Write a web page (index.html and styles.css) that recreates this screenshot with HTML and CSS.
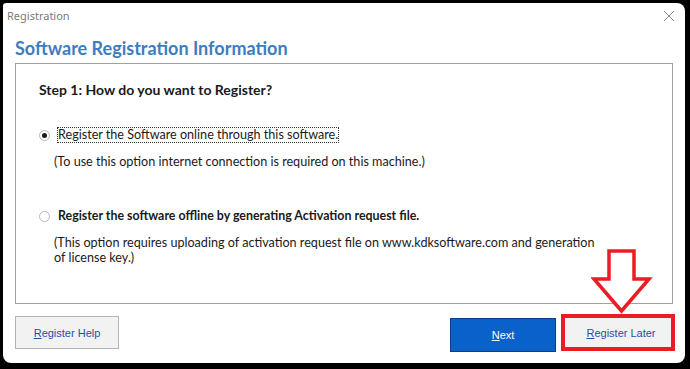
FILE: index.html
```html
<!doctype html>
<html lang="en">
    <head>
        <meta charset="utf-8">
        <title>Registration</title>
        <meta name="viewport" content="width=device-width, initial-scale=1">
        <link rel="stylesheet" href="styles.css">
    </head>
    <body>
        <div class="window">
            <div class="titlebar">
                <span class="caption">Registration</span>
                <svg class="close" width="12" height="12" viewBox="0 0 12 12">
                    <path d="M1 1 L11 11 M11 1 L1 11" stroke="#8a8a8a" stroke-width="1" fill="none"/>
                </svg>
            </div>

            <h1 class="heading">Software Registration Information</h1>

            <div class="panel">
                <div class="step">Step 1: How do you want to Register?</div>

                <div class="option">
                    <div class="choice">
                        <span class="radio checked"></span>
                        <span class="label focused">Register the Software online through this software.</span>
                    </div>
                    <div class="note">(To use this option internet connection is required on this machine.)</div>
                </div>

                <div class="option second">
                    <div class="choice">
                        <span class="radio"></span>
                        <span class="label bold">Register the software offline by generating Activation request file.</span>
                    </div>
                    <div class="note">(This option requires uploading of activation request file on www.kdksoftware.com and generation<br>of license key.)</div>
                </div>
            </div>

            <div class="buttons">
                <div class="button help"><span><u>R</u>egister Help</span></div>
                <div class="spacer"></div>
                <div class="button next"><span><u>N</u>ext</span></div>
                <div class="highlight">
                    <div class="button later"><span><u>R</u>egister Later</span></div>
                </div>
            </div>

            <!-- annotation arrow pointing at Register Later -->
            <svg class="arrow" width="62" height="66" viewBox="0 0 62 66">
                <path d="M18 2 L43 2 L43 30 L58 30 L30.5 62 L3 30 L18 30 Z" fill="#ffffff" stroke="#ec1c24" stroke-width="3.5" stroke-linejoin="miter"/>
            </svg>
        </div>
    </body>
</html>
```

FILE: styles.css
```css
body {
    margin: 0;
    background-color: #000;
}

.window {
    position: relative;
    box-sizing: border-box;
    margin: 3px 5px 0 3px;
    height: 360px;
    background-color: #fff;
    border-radius: 3px 8px 8px 8px;
    display: flex;
    flex-direction: column;
}

.titlebar {
    display: flex;
    align-items: center;
    justify-content: space-between;
    height: 24px;
    padding: 0 10px 0 4px;
}

.caption {
    font-family: "Noto Sans", sans-serif;
    font-size: 11px;
    color: #7a7a7a;
}

.close {
    display: block;
    margin-top: 1px;
}

.heading {
    margin: 7px 0 0 12px;
    height: 29px;
    font-family: Lato, sans-serif;
    font-size: 18px;
    font-weight: bold;
    color: #3d7dbd;
    line-height: 29px;
}

.panel {
    box-sizing: border-box;
    margin: 0 12px;
    height: 241px;
    border: 1px solid #a0a0a0;
    padding: 17px 0 0 23px;
    font-family: Lato, sans-serif;
    font-size: 12.6px;
    color: #1a1a1a;
}

.step {
    font-weight: bold;
    font-size: 14px;
    line-height: 18px;
}

.option {
    margin-top: 27px;
}

.option.second {
    margin-top: 38px;
}

.choice {
    display: flex;
    align-items: center;
    height: 18px;
}

.radio {
    box-sizing: border-box;
    width: 11px;
    height: 11px;
    margin: 0 7px 0 0;
    border: 1px solid #b8b8b8;
    border-radius: 50%;
    background-color: #fff;
    position: relative;
}

.radio.checked::after {
    content: "";
    position: absolute;
    left: 2px;
    top: 2px;
    width: 5px;
    height: 5px;
    border-radius: 50%;
    background-color: #1a1a1a;
}

.label {
    line-height: 16px;
    padding: 0 1px;
}

.label.focused {
    outline: 1px dotted #333;
    outline-offset: -1px;
}

.label.bold {
    font-weight: bold;
    font-size: 12.4px;
}

.note {
    margin: 10px 0 0 15px;
    line-height: 15px;
}

.buttons {
    display: flex;
    align-items: flex-start;
    margin: 10px 10px 0 12px;
}

.spacer {
    flex: 1;
}

.button {
    box-sizing: border-box;
    display: flex;
    align-items: center;
    justify-content: center;
    font-family: "Liberation Sans", Arial, sans-serif;
    font-size: 11px;
    color: #1f4fae;
    background-color: #f2f2f2;
}

.button.help {
    width: 104px;
    height: 33px;
    margin-top: 2px;
    border: 1px solid #b4b4b4;
}

.button.next {
    width: 106px;
    height: 34px;
    margin-top: 4px;
    margin-right: 5px;
    border: 1px solid #0a3d8f;
    background-color: #0a61c9;
    color: #fff;
}

.highlight {
    box-sizing: border-box;
    width: 114px;
    height: 37px;
    border: 4px solid #ec1c24;
}

.button.later {
    width: 100%;
    height: 100%;
    padding-left: 6px;
}

.arrow {
    position: absolute;
    left: 588px;
    top: 246px;
}
```
